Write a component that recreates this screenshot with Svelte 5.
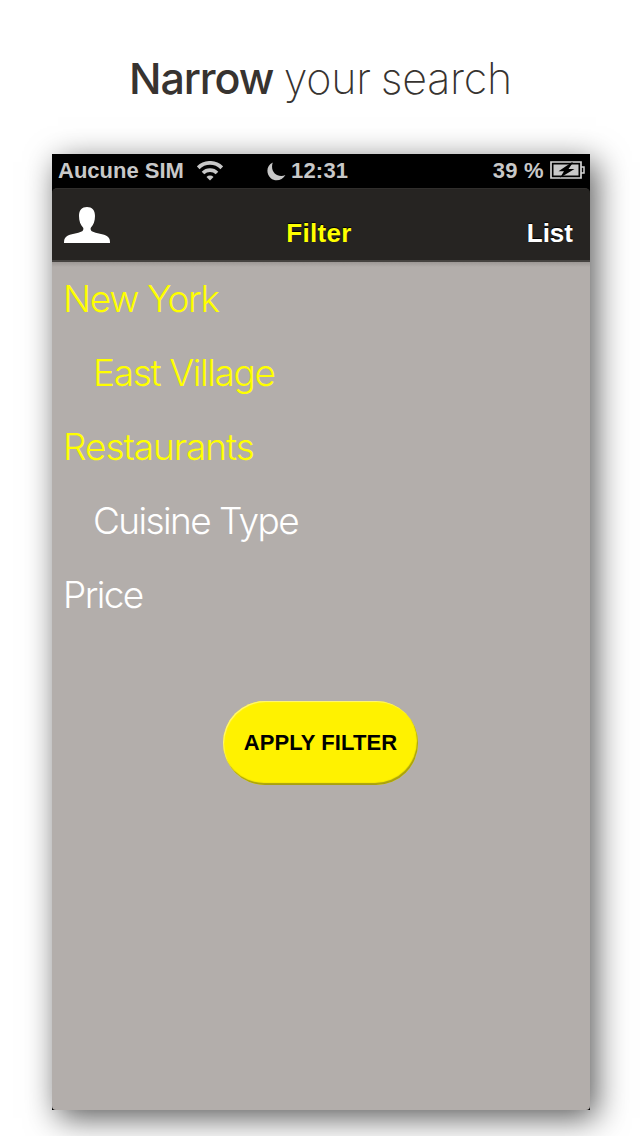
<script>
  const filters = [
    { label: 'New York', active: true, nested: false, spacing: -1.35 },
    { label: 'East Village', active: true, nested: true, spacing: -1.35 },
    { label: 'Restaurants', active: true, nested: false, spacing: -1.02 },
    { label: 'Cuisine Type', active: false, nested: true, spacing: -1.6 },
    { label: 'Price', active: false, nested: false, spacing: -1.6 }
  ];
</script>

<main>
  <h1><strong>Narrow</strong> <span>your search</span></h1>
  <section class="phone">
    <div class="status">
      <div class="carrier">
        <span>Aucune SIM</span>
        <svg width="26" height="20" viewBox="0 0 26 20" fill="none" stroke="#c8c8c8">
          <path d="M1.2 6.800a16.600 16.600 0 0 1 23.600 0" stroke-width="3.800" />
          <path d="M6 12a10 10 0 0 1 14 0" stroke-width="3.700" />
          <path d="M9.500 15.900a4.900 4.900 0 0 1 7 0L13 19.600z" fill="#c8c8c8" stroke="none" />
        </svg>
      </div>
      <div class="clock">
        <svg width="19" height="19" viewBox="0 0 19 19">
          <path d="M5.800.6C-.8 3.500-1.200 12 3.800 16.200c4.400 3.700 11.500 2.500 14.600-3.200C10.600 16.500 2.500 9.500 5.800.6z" fill="#c8c8c8" />
        </svg>
        <span>12:31</span>
      </div>
      <div class="power">
        <span>39 %</span>
        <svg width="36" height="18" viewBox="0 0 36 18">
          <path d="M1 1h30v16H1z" fill="none" stroke="#d2d2d2" stroke-width="1.700" />
          <path d="M31 6h3v6h-3" fill="none" stroke="#d2d2d2" stroke-width="1.500" />
          <path d="M3.500 3.500h25v11h-25z" fill="#c8c8c8" />
          <path d="M21.500 1.500 8.500 10.300H14L10 16.800 24.500 7.900H18.500L23 1.500z" fill="#000" />
        </svg>
      </div>
    </div>
    <nav>
      <svg class="user" width="48" height="38" viewBox="0 0 48 38">
        <path d="M24 1c5 0 8 3 8 9 0 5-1.500 9-4 11.500-.8.8-.3 3 .8 3.700 4.500 2.500 12 2.300 15.700 5.300 2 1.600 2.500 3.200 2.500 6.500H1c0-3.300.5-4.900 2.500-6.500 3.700-3 11.200-2.800 15.700-5.300 1.100-.7 1.600-2.900.8-3.700-2.500-2.500-4-6.500-4-11.500 0-6 3-9 8-9z" fill="#fff" />
      </svg>
      <span class="title">Filter</span>
      <span class="list">List</span>
    </nav>
    <div class="content">
      <ul>
        {#each filters as item}
          <li class:active={item.active} class:nested={item.nested} style="letter-spacing: {item.spacing}px">{item.label}</li>
        {/each}
      </ul>
      <button>APPLY FILTER</button>
    </div>
  </section>
</main>

<style>
  :global(body) { background: #fff; }
  main {
    box-sizing: border-box;
    width: 640px;
    height: 1136px;
    overflow: hidden;
    padding-left: 52px;
    font-family: "Liberation Sans", Arial, sans-serif;
  }
  h1 {
    box-sizing: border-box;
    height: 154px;
    margin: 0;
    padding: 53px 0 0 77px;
    font: 200 43px/50px Inter, sans-serif;
    color: #373330;
    white-space: nowrap;
    word-spacing: -1.500px;
  }
  strong { font-weight: 500; letter-spacing: -1.100px; }
  h1 span { letter-spacing: -.3px; }
  .phone {
    display: flex;
    flex-direction: column;
    width: 538px;
    height: 956px;
    background: #000;
    box-shadow: 6px 8px 30px rgba(0, 0, 0, .65);
  }
  .status {
    display: grid;
    grid-template-columns: 209px 1fr auto;
    align-items: center;
    height: 34px;
    padding: 0 4px 0 6px;
    color: #c8c8c8;
    font-size: 22px;
    font-weight: bold;
    line-height: 34px;
  }
  .status div { display: flex; align-items: center; }
  .carrier { gap: 13px; }
  .clock { gap: 5px; letter-spacing: .2px; }
  .power { gap: 6px; letter-spacing: .3px; }
  svg { display: block; }
  .power svg { margin-top: -2px; }
  nav {
    box-sizing: border-box;
    display: grid;
    grid-template-columns: 1fr auto 1fr;
    height: 74px;
    padding: 16px 17px 0 11px;
    border-radius: 5px 5px 0 0;
    background: #262422;
    border-top: 1px solid #302e2c;
    border-bottom: 2px solid #464340;
    line-height: 56px;
    font-size: 26px;
    font-weight: bold;
    text-shadow: 0 -1px 1px #000;
  }
  .user { margin-top: 1px; }
  .title { margin-left: 2px; color: #ff0; letter-spacing: .35px; }
  .list { color: #fff; text-align: right; }
  .content {
    flex: 1;
    display: flex;
    flex-direction: column;
    align-items: center;
    background: linear-gradient(#9d9895, #b3aeab 5px);
    border-radius: 0 0 4px 4px;
  }
  ul {
    align-self: stretch;
    margin: 0;
    padding: 0 0 0 11px;
    list-style: none;
    font: 300 37px/74px Inter, sans-serif;
    color: #fff;
  }
  li { height: 74px; white-space: nowrap; }
  .active { color: #ff0; }
  .nested { padding-left: 30px; }
  button {
    width: 195px;
    height: 84px;
    margin: 69px 1px 0 0;
    padding: 0;
    border: 0;
    border-radius: 42px;
    background: #fff200;
    box-shadow: inset -1px -2px 1px #a8a010, inset 1px 1px 1px #fff77a;
    color: #000;
    font: bold 22px/82px "Liberation Sans", Arial, sans-serif;
    letter-spacing: .1px;
    white-space: nowrap;
  }
</style>
